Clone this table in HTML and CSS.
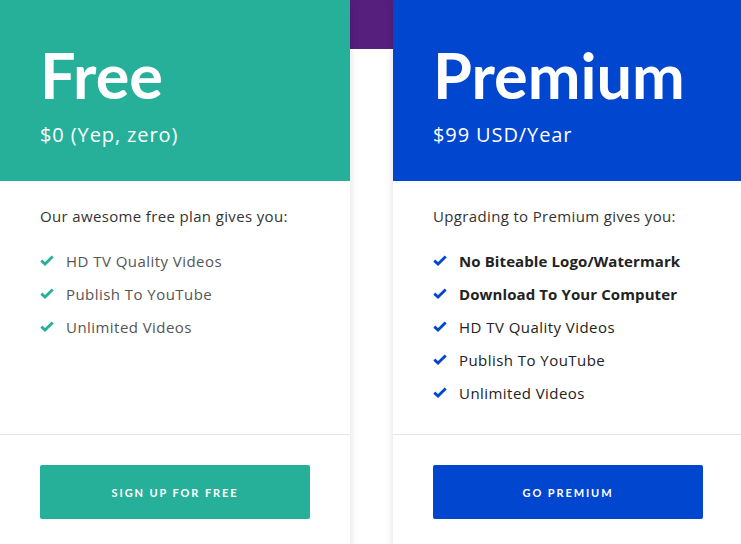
FILE: index.html
```html
<!DOCTYPE html>
<html>
<head>
    <link rel="stylesheet" href="styles.css">
</head>
<body>
    <div class="plans">
        <div class="plan plan-free">
            <div class="plan-head">
                <h1>Free</h1>
                <p class="price">$0 (Yep, zero)</p>
            </div>
            <div class="plan-body">
                <p class="intro">Our awesome free plan gives you:</p>
                <ul class="features">
                    <li><svg class="check" viewBox="0 0 14 11"><path d="M1.3 5.6 L5 9 L12.7 1.4"/></svg>HD TV Quality Videos</li>
                    <li><svg class="check" viewBox="0 0 14 11"><path d="M1.3 5.6 L5 9 L12.7 1.4"/></svg>Publish To YouTube</li>
                    <li><svg class="check" viewBox="0 0 14 11"><path d="M1.3 5.6 L5 9 L12.7 1.4"/></svg>Unlimited Videos</li>
                </ul>
            </div>
            <div class="plan-foot">
                <a class="button" href="#">Sign up for free</a>
            </div>
        </div>
        <div class="plan plan-premium">
            <div class="plan-head">
                <h1>Premium</h1>
                <p class="price">$99 USD/Year</p>
            </div>
            <div class="plan-body">
                <p class="intro">Upgrading to Premium gives you:</p>
                <ul class="features">
                    <li class="strong"><svg class="check" viewBox="0 0 14 11"><path d="M1.3 5.6 L5 9 L12.7 1.4"/></svg>No Biteable Logo/Watermark</li>
                    <li class="strong"><svg class="check" viewBox="0 0 14 11"><path d="M1.3 5.6 L5 9 L12.7 1.4"/></svg>Download To Your Computer</li>
                    <li><svg class="check" viewBox="0 0 14 11"><path d="M1.3 5.6 L5 9 L12.7 1.4"/></svg>HD TV Quality Videos</li>
                    <li><svg class="check" viewBox="0 0 14 11"><path d="M1.3 5.6 L5 9 L12.7 1.4"/></svg>Publish To YouTube</li>
                    <li><svg class="check" viewBox="0 0 14 11"><path d="M1.3 5.6 L5 9 L12.7 1.4"/></svg>Unlimited Videos</li>
                </ul>
            </div>
            <div class="plan-foot">
                <a class="button" href="#">Go premium</a>
            </div>
        </div>
    </div>
</body>
</html>
```

FILE: styles.css
```css
body {
    margin: 0;
    overflow: hidden;
    font-family: "Open Sans", "Liberation Sans", sans-serif;
    background: linear-gradient(#561f7e 49px, #fff 49px);
}
.plans {
    display: flex;
    gap: 43px;
    width: 743px;
}
.plan {
    flex: 0 0 350px;
    width: 350px;
    background: #fff;
    box-shadow: 0 0 8px rgba(0, 0, 0, 0.13);
}
.plan-head {
    height: 181px;
    box-sizing: border-box;
    padding: 37px 40px 0;
    color: #fff;
}
.plan-free .plan-head {
    background: #26b099;
}
.plan-premium .plan-head {
    background: #0046cf;
}
h1 {
    margin: 0;
    font-family: Lato, "Liberation Sans", sans-serif;
    font-size: 63px;
    font-weight: 700;
    line-height: 76px;
}
.price {
    margin: 10px 0 0;
    font-size: 20px;
    letter-spacing: 0.9px;
    line-height: 24px;
}
.plan-body {
    height: 254px;
    box-sizing: border-box;
    padding: 25px 40px 0;
    border-bottom: 1px solid #e6e6e6;
}
.intro {
    margin: 0 0 18px;
    font-size: 15px;
    letter-spacing: 0.35px;
    line-height: 20px;
    color: #333;
}
.features {
    list-style: none;
    margin: 0;
    padding: 0;
}
.features li {
    display: flex;
    align-items: center;
    height: 33px;
    font-size: 15px;
    letter-spacing: 0.45px;
    color: #555;
}
.plan-premium .features li {
    color: #222;
}
.features li.strong {
    font-weight: 700;
    letter-spacing: 0.1px;
}
.check {
    width: 14px;
    height: 11px;
    margin-right: 12px;
    fill: none;
    stroke-width: 2.8;
}
.plan-free .check {
    stroke: #26b099;
}
.plan-premium .check {
    stroke: #0046cf;
}
.plan-foot {
    padding: 30px 40px 40px;
}
.button {
    display: flex;
    align-items: center;
    justify-content: center;
    height: 54px;
    border-radius: 2px;
    color: #fff;
    text-decoration: none;
    text-transform: uppercase;
    font-family: Lato, "Liberation Sans", sans-serif;
    font-size: 11px;
    font-weight: 700;
    letter-spacing: 1.9px;
}
.plan-free .button {
    background: #26b099;
}
.plan-premium .button {
    background: #0046cf;
}
```
